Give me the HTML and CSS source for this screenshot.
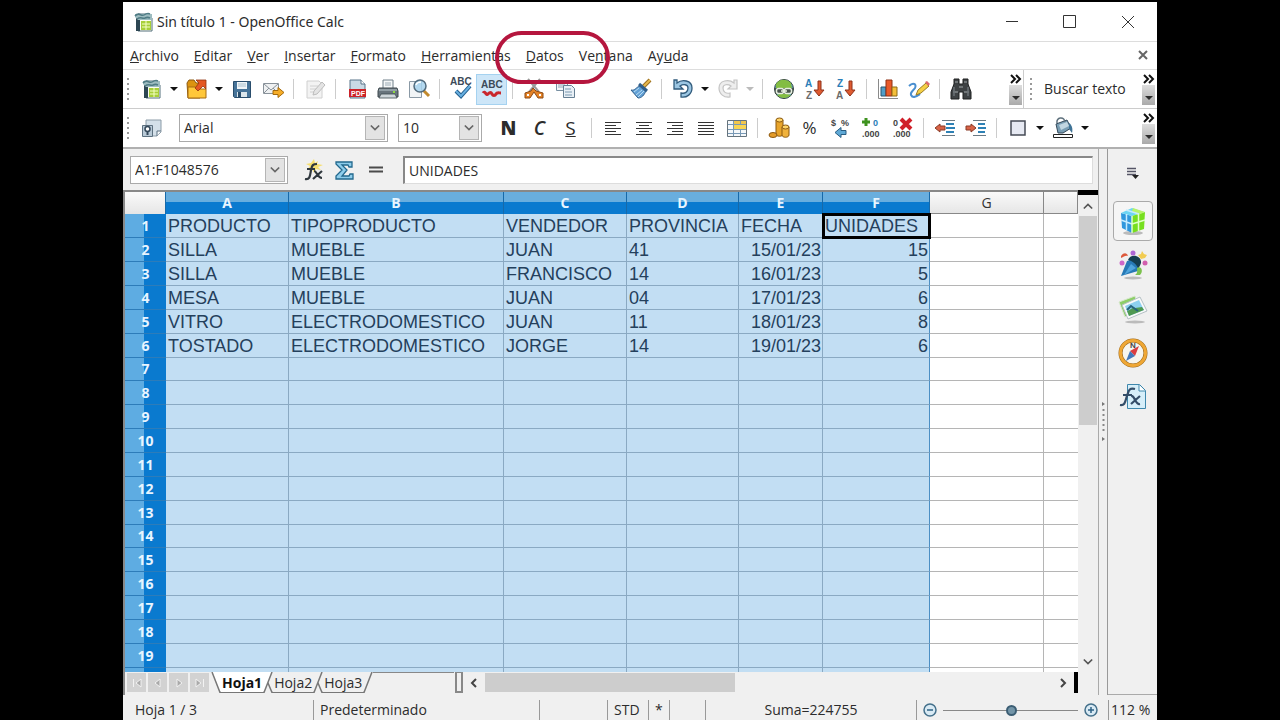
FILE: index.html
```html
<!DOCTYPE html>
<html lang="es">
<head>
<meta charset="utf-8">
<title>Sin título 1 - OpenOffice Calc</title>
<link rel="stylesheet" href="styles.css">
</head>
<body>
<svg class="defs" width="0" height="0" aria-hidden="true">
  <symbol id="i-doc" viewBox="0 0 22 22"><path d="M5 3h10l4 4v13H5z" fill="#fdfdf0" stroke="#55707c"/><path d="M3 4h4v16H3z" fill="#2d4653"/><path d="M2 3h17v6H5L2 6z" fill="#9dbcc0"/><path d="M2 5c4-5 6 1 9-1s4-2 6-1M4 8c4-3 5 0 8-1 2-1 3-1 5 0" fill="none" stroke="#4f7b84" stroke-width="1.5"/><path d="M8 10h10v9H8z" fill="#a8cf38"/><path d="M9 13h8M9 16h8M13 10v9" stroke="#f4ffc4"/></symbol>
  <symbol id="i-down" viewBox="0 0 8 5"><path d="M0 0h8L4 4z" fill="currentColor"/></symbol>
  <symbol id="i-chev" viewBox="0 0 12 8"><path d="M1 1l5 5 5-5" fill="none" stroke="currentColor" stroke-width="2"/></symbol>
  <symbol id="i-more" viewBox="0 0 12 10"><path d="M1 1l4 4-4 4M6 1l4 4-4 4" fill="none" stroke="#111" stroke-width="2"/></symbol>
</svg>

<div class="window">
  <header class="titlebar">
    <svg class="ico" aria-hidden="true"><use href="#i-doc"/></svg>
    <h1>Sin título 1 - OpenOffice Calc</h1>
    <div class="wincontrols">
      <button aria-label="Minimizar"><svg width="14" height="14"><path d="M1 6.500h12" stroke="#333" fill="none"/></svg></button>
      <button aria-label="Maximizar"><svg width="14" height="14"><path d="M.5 .5h12v12h-12z" stroke="#333" fill="none"/></svg></button>
      <button aria-label="Cerrar"><svg width="14" height="14"><path d="M1 1l12 12M13 1L1 13" stroke="#333" fill="none"/></svg></button>
    </div>
  </header>

  <nav class="menubar">
    <button><u>A</u>rchivo</button><button><u>E</u>ditar</button><button><u>V</u>er</button><button><u>I</u>nsertar</button><button><u>F</u>ormato</button><button><u>H</u>erramientas</button><button class="marked"><u>D</u>atos</button><button>Ve<u>n</u>tana</button><button>Ay<u>u</u>da</button>
    <button class="closedoc" aria-label="Cerrar documento"><svg width="12" height="12"><path d="M2 1l8 8M10 1l-8 8" stroke="#666" stroke-width="2"/></svg></button>
  </nav>

  <div class="toolbar">
    <span class="grip"></span>
    <button class="tool" aria-label="Nuevo"><svg class="ico"><use href="#i-doc"/></svg></button>
    <button class="drop" aria-label="Opciones de nuevo"><svg><use href="#i-down"/></svg></button>
    <button class="tool" aria-label="Abrir"><svg class="ico"><path d="M1 5l2-3h5l2 3h4v15H2z" fill="#dc9310" stroke="#8b5a12"/><path d="M2 20V9h7l2 2h9v9z" fill="#ffc73a" stroke="#a66b10"/><path d="M9 10l4-5-3-3h10v9l-3-3-5 5z" fill="#e45722" stroke="#91340f" stroke-width=".8"/></svg></button>
    <button class="drop" aria-label="Opciones de abrir"><svg><use href="#i-down"/></svg></button>
    <button class="tool" aria-label="Guardar"><svg class="ico"><path d="M2.500 3.500h17v16h-16l-1-1z" fill="#477499" stroke="#294d6c"/><path d="M6 4h10v7H6z" fill="#f0f5f8"/><path d="M7 6h8M7 8h8" stroke="#aac0cd"/><path d="M6 14h10v5H6z" fill="#dce6eb"/><path d="M7 14h3v5H7z" fill="#294d6c"/></svg></button>
    <button class="tool" aria-label="Enviar por correo"><svg class="ico"><path d="M1.500 5.500h15v10h-15z" fill="#eff1f2" stroke="#89929a"/><path d="M2 6l7 6 7-6M2 15l5-5M16 15l-5-5" fill="none" stroke="#89929a"/><path d="M11 12.500h5v-3l6 5-6 5v-3h-5z" fill="#f6ad28" stroke="#a46a0b"/></svg></button>
    <span class="sep"></span>
    <button class="tool" aria-label="Editar archivo" disabled><svg class="ico"><path d="M3 3h12l3 3v14H3z" fill="#f3f3f3" stroke="#d0d0d0"/><path d="M6 8h8M6 11h7M6 14h4" stroke="#d0d0d0"/><path d="M9 17l1-4 8-9 3 3-8 9z" fill="#e4e4e4" stroke="#bdbdbd"/></svg></button>
    <span class="sep"></span>
    <button class="tool" aria-label="Exportar como PDF"><svg class="ico"><path d="M4 2h11l4 4v14H4z" fill="#c9d9e4" stroke="#59748a"/><path d="M15 2v4h4" fill="#fff" stroke="#59748a"/><path d="M3 11h17v8H3z" fill="#cc2229"/><text x="5" y="18" class="t-pdf">PDF</text></svg></button>
    <button class="tool" aria-label="Imprimir"><svg class="ico"><path d="M6 10V2h10v8" fill="#f5f7f8" stroke="#71808a"/><path d="M8 5h6M8 7h6" stroke="#9cabb5"/><path d="M2 10h18l1 3v6H1v-6z" fill="#68747c" stroke="#3e494f"/><path d="M2 12h18" stroke="#bcc9cf"/><path d="M4 16h14l2 4H2z" fill="#cfd7db" stroke="#3e494f" stroke-width=".8"/><path d="M16 14h2" stroke="#8ddb40" stroke-width="2"/></svg></button>
    <button class="tool" aria-label="Vista preliminar"><svg class="ico"><path d="M1.500 3.500h12v16h-12z" fill="#f1f4f6" stroke="#8a99a5"/><path d="M15 12l6 6" stroke="#c28a2d" stroke-width="3"/><circle cx="12" cy="8" r="6" fill="#a7d2ed" fill-opacity=".85" stroke="#526b7d" stroke-width="1.500"/><path d="M8 7c1-3 3-3 5-3" fill="none" stroke="#fff" stroke-width="1.500"/></svg></button>
    <span class="sep"></span>
    <button class="tool" aria-label="Ortografía"><svg class="ico"><text x="0" y="7" class="t-abc">ABC</text><path d="M6 13l5 5L20 8" fill="none" stroke="#235f8e" stroke-width="4"/><path d="M6 13l5 5L20 8" fill="none" stroke="#68afe0" stroke-width="2"/></svg></button>
    <button class="tool on" aria-label="Revisión automática" aria-pressed="true"><svg class="ico"><text x="0" y="10" class="t-abc">ABC</text><path d="M2 15c2-3 3 3 5 1s3-2 4 0 3 2 4 0 3-1 5-1" fill="none" stroke="#c9272d" stroke-width="3"/></svg></button>
    <span class="sep"></span>
    <button class="tool" aria-label="Cortar"><svg class="ico"><path d="M5 1l11 13M17 1L6 14" stroke="#9a9a9a" stroke-width="2"/><path d="M10 10l3 3 7 2v5h-5l-4-6-4 6H2v-5l6-2z" fill="#e48225" stroke="#8e4a14"/><path d="M4 17h2M16 17h2" stroke="#fff" stroke-width="2"/></svg></button>
    <button class="tool" aria-label="Copiar"><svg class="ico"><path d="M2.500 2.500h11v10h-11z" fill="#f2f5f8" stroke="#7890a3"/><path d="M4 5h7M4 7h7M4 9h7" stroke="#91a5b4"/><path d="M9.500 7.500h8l3 3v9h-11z" fill="#e9f0f6" stroke="#667f93"/><path d="M11 11h6M11 14h7M11 17h7" stroke="#7b99b0"/></svg></button>
    <span class="blank"></span>
    <button class="tool" aria-label="Copiar formato"><svg class="ico"><path d="M13 9l7-7" stroke="#9b7021" stroke-width="4"/><path d="M13 9l7-7" stroke="#e8b94d" stroke-width="2"/><path d="M1 12c4 1 5-3 9-4l6 5c-2 4-4 7-8 7z" fill="#63a1d6" stroke="#315f8b"/><path d="M4 14l5-4M6 17l6-5M8 19l6-6" stroke="#b9ddf3"/><path d="M9 6l8 7" stroke="#315f8b" stroke-width="3"/></svg></button>
    <span class="sep"></span>
    <button class="tool" aria-label="Deshacer"><svg class="ico"><path d="M2 2h3v3c5-4 15-3 15 5 0 6-5 10-11 9v-4c4 1 7-1 7-5 0-4-5-4-8-2l3 3H2z" fill="#9cc6e2" stroke="#315b7c" stroke-width="1.300"/></svg></button>
    <button class="drop" aria-label="Historial de deshacer"><svg><use href="#i-down"/></svg></button>
    <button class="tool" aria-label="Restaurar" disabled><svg class="ico"><path d="M20 2h-3v3C12 1 2 2 2 10c0 6 5 10 11 9v-4c-4 1-7-1-7-5 0-4 5-4 8-2l-3 3h9z" fill="#eee" stroke="#c4c4c4" stroke-width="1.200"/></svg></button>
    <button class="drop" aria-label="Historial de restaurar" disabled><svg><use href="#i-down"/></svg></button>
    <span class="sep"></span>
    <button class="tool" aria-label="Hiperenlace"><svg class="ico"><circle cx="11" cy="11" r="9.500" fill="#5a9fc6" stroke="#34413c"/><path d="M3 6c3-5 10-6 15-1l1 5H9l-6 3zM4 17c4-2 9-2 14 0-4 4-10 4-14 0z" fill="#83bd43"/><path d="M2 10h18v6H2z" fill="#47534c"/><rect x="3.500" y="10.500" width="7" height="5" rx="2" fill="none" stroke="#e6efdf" stroke-width="1.500"/><rect x="11.500" y="10.500" width="7" height="5" rx="2" fill="none" stroke="#e6efdf" stroke-width="1.500"/><path d="M8 13h6" stroke="#e6efdf" stroke-width="1.500"/></svg></button>
    <button class="tool" aria-label="Orden ascendente"><svg class="ico"><text x="1" y="9" class="t-sort blue">A</text><text x="2" y="21" class="t-sort gray">Z</text><path d="M14 3h3v9h3l-5 6-5-6h4z" fill="#df5b31" stroke="#8e321b"/></svg></button>
    <button class="tool" aria-label="Orden descendente"><svg class="ico"><text x="2" y="9" class="t-sort blue">Z</text><text x="1" y="21" class="t-sort gray">A</text><path d="M14 3h3v9h3l-5 6-5-6h4z" fill="#df5b31" stroke="#8e321b"/></svg></button>
    <span class="sep"></span>
    <button class="tool" aria-label="Gráfico"><svg class="ico"><path d="M1.500 1v19.500H21" fill="none" stroke="#8a8a8a"/><path d="M4 9h5v9H4z" fill="#519ec7" stroke="#29546e"/><path d="M9 2h6v16H9z" fill="#e95a29" stroke="#8f3015"/><path d="M15 9h5v9h-5z" fill="#f4bf3a" stroke="#8c6a16"/></svg></button>
    <button class="tool" aria-label="Dibujo"><svg class="ico"><path d="M1 8c4-4 8-2 6 2-2 3-5 4-4 7 2 4 6 1 9-1" fill="none" stroke="#4a8fd0" stroke-width="2"/><path d="M8 17l2-5 8-7 3 3-8 7z" fill="#f4cf45" stroke="#9a7c25"/><path d="M17 4l2-1 3 3-2 2z" fill="#dc6b70"/></svg></button>
    <span class="sep"></span>
    <button class="tool" aria-label="Buscar y reemplazar"><svg class="ico"><path d="M4 1h5v5h4V1h5v5l3 8v7h-8v-7H9v7H1v-7l3-8z" fill="#3e4244" stroke="#1e2021"/><path d="M3 14h5M14 14h5M5 4h3M14 4h3M9 9h4" stroke="#a2a8aa"/><path d="M4 9v9M18 9v9" stroke="#6b7275" stroke-width="1.500"/></svg></button>
    <button class="overflow push" aria-label="Más botones"><svg class="more"><use href="#i-more"/></svg><svg class="arr"><use href="#i-down"/></svg></button>
    <div class="findbar">
      <span class="grip"></span>
      <input class="find" aria-label="Buscar texto" value="Buscar texto">
      <button class="overflow push" aria-label="Más botones de búsqueda"><svg class="more"><use href="#i-more"/></svg><svg class="arr"><use href="#i-down"/></svg></button>
    </div>
  </div>

  <div class="toolbar format">
    <span class="grip"></span>
    <button class="tool" aria-label="Estilo y formato"><svg class="ico"><path d="M5 3h15v12l-4 4H5z" fill="#d4e0e9" stroke="#8c9ca8"/><path d="M20 14h-4v5" fill="#f8fafc" stroke="#5d7180"/><path d="M1.500 8.500h10v11h-10z" fill="#b9cad7" stroke="#5d7180"/><circle cx="6.500" cy="12" r="2.500" fill="#fff" stroke="#34485a" stroke-width="1.500"/><path d="M6.500 14v4" stroke="#34485a" stroke-width="2"/></svg></button>
    <span class="combo font"><select aria-label="Nombre de fuente"><option>Arial</option></select><svg><use href="#i-chev"/></svg></span>
    <span class="combo size"><select aria-label="Tamaño de fuente"><option>10</option></select><svg><use href="#i-chev"/></svg></span>
    <button class="tool letter bold" aria-label="Negrita">N</button>
    <button class="tool letter italic" aria-label="Cursiva">C</button>
    <button class="tool letter under" aria-label="Subrayado">S</button>
    <span class="sep"></span>
    <button class="tool" aria-label="Alinear a la izquierda"><svg class="ico"><path d="M3 5.500h16M3 8.500h11M3 11.500h16M3 14.500h11M3 17.500h16" stroke="#333"/></svg></button>
    <button class="tool" aria-label="Centrar"><svg class="ico"><path d="M3 5.500h16M6 8.500h10M3 11.500h16M6 14.500h10M3 17.500h16" stroke="#333"/></svg></button>
    <button class="tool" aria-label="Alinear a la derecha"><svg class="ico"><path d="M3 5.500h16M8 8.500h11M3 11.500h16M8 14.500h11M3 17.500h16" stroke="#333"/></svg></button>
    <button class="tool" aria-label="Justificar"><svg class="ico"><path d="M3 5.500h16M3 8.500h16M3 11.500h16M3 14.500h16M3 17.500h16" stroke="#333"/></svg></button>
    <button class="tool" aria-label="Combinar celdas"><svg class="ico"><path d="M1.500 3.500h19v16h-19z" fill="#f5f8fa" stroke="#65737c"/><path d="M8 4h12v3H8z" fill="#f1c74c"/><path d="M7 8h13v4H7z" fill="#f8d553"/><path d="M2 7.500h18M2 12.500h18M2 16.500h18M7.500 4v15M14.500 4v3M14.500 13v6" stroke="#7899b6"/></svg></button>
    <span class="sep"></span>
    <button class="tool" aria-label="Moneda"><svg class="ico"><path d="M8 3v14c0 3 7 3 7 0V3z" fill="#e9a52b" stroke="#8b5810"/><ellipse cx="11.500" cy="3" rx="3.500" ry="2" fill="#ffd467" stroke="#8b5810"/><path d="M14 10v8c0 3 7 3 7 0v-8z" fill="#f0b23c" stroke="#8b5810"/><ellipse cx="17.500" cy="10" rx="3.500" ry="2" fill="#ffd467" stroke="#8b5810"/><ellipse cx="5" cy="18" rx="4" ry="2.500" fill="#e49b29" stroke="#8b5810"/></svg></button>
    <button class="tool percent" aria-label="Porcentaje">%</button>
    <button class="tool" aria-label="Formato estándar"><svg class="ico"><text x="1" y="9" class="t-num">$</text><text x="11" y="9" class="t-num">%</text><path d="M5 15.500l6-5v3h5v4h-5v3z" fill="#5fa9d6" stroke="#285d82"/></svg></button>
    <button class="tool" aria-label="Agregar decimal"><svg class="ico"><path d="M5 1v8M1 5h8" stroke="#3e921f" stroke-width="3"/><text x="12" y="9" class="t-num blue">0</text><text x="1" y="20" class="t-num">.000</text></svg></button>
    <button class="tool" aria-label="Eliminar decimal"><svg class="ico"><text x="1" y="9" class="t-num">0</text><text x="1" y="20" class="t-num">.000</text><path d="M9 2l10 10M19 2L9 12" stroke="#d01f29" stroke-width="4"/></svg></button>
    <span class="sep"></span>
    <button class="tool" aria-label="Reducir sangría"><svg class="ico"><path d="M8 3.500h13M8 18.500h13" stroke="#6b7a84"/><path d="M12 7h8M12 11h9M12 15h8" stroke="#2e81b5" stroke-width="2"/><path d="M1 11l5-4v2h5v4H6v2z" fill="#d96347" stroke="#893b27"/></svg></button>
    <button class="tool" aria-label="Aumentar sangría"><svg class="ico"><path d="M8 3.500h13M8 18.500h13" stroke="#6b7a84"/><path d="M13 7h7M13 11h8M13 15h7" stroke="#2e81b5" stroke-width="2"/><path d="M11 11L6 7v2H1v4h5v2z" fill="#d96347" stroke="#893b27"/></svg></button>
    <span class="sep"></span>
    <button class="tool" aria-label="Borde"><svg class="ico"><path d="M4 4h14v14H4z" fill="#e6e9f2" stroke="#454b55" stroke-width="1.500"/></svg></button>
    <button class="drop" aria-label="Opciones de borde"><svg><use href="#i-down"/></svg></button>
    <button class="tool" aria-label="Color de fondo"><svg class="ico"><path d="M4 7l11-4 4 8-8 5H6z" fill="#7a9eb4" stroke="#34495a"/><path d="M5 6c-1-6 7-7 8-1" fill="none" stroke="#5f717d" stroke-width="1.500"/><path d="M7 8l8-3 2 4-8 4z" fill="#c2d6e1"/><path d="M17 6c3 2 4 6 3 10l-3-4z" fill="#3f7396"/><path d="M1.500 17.500h19v3h-19z" fill="#fff" stroke="#222"/></svg></button>
    <button class="drop" aria-label="Opciones de color"><svg><use href="#i-down"/></svg></button>
    <button class="overflow push" aria-label="Más formato"><svg class="more"><use href="#i-more"/></svg><svg class="arr"><use href="#i-down"/></svg></button>
  </div>

  <div class="workspace">
    <main class="document">
      <div class="formulabar">
        <span class="combo name"><input aria-label="Cuadro de nombre" value="A1:F1048576"><svg><use href="#i-chev"/></svg></span>
        <button class="tool" aria-label="Asistente de funciones"><svg class="ico"><path d="M11 0l1 4 3-2-1 3 6 1-5 2 3 3-5-1-2 4-2-4-5 1 3-4-4-2 5-1z" fill="#f6df70"/><path d="M2 20c5 1 5-3 6-9 1-5 2-6 6-6M4 10h8M11 12c3 0 3 7 8 7M19 12l-9 8" fill="none" stroke="#30383e" stroke-width="2.200"/></svg></button>
        <button class="tool" aria-label="Suma"><svg class="ico"><path d="M2 3h16v5h-3l-1-2H8l5 5-5 6h7l1-2h3v5H2v-3l6-6-6-6z" fill="#8ecdeb" stroke="#22688d" stroke-width="1.300"/></svg></button>
        <button class="tool" aria-label="Función"><svg class="ico"><path d="M4 8.500h14M4 12.500h14" stroke="#4b4b4b" stroke-width="2"/></svg></button>
        <input class="formula" aria-label="Línea de entrada" value="UNIDADES">
      </div>

      <div class="sheetarea">
        <div class="sheet">
          <table>
            <colgroup><col class="w-h"><col class="w-a"><col class="w-b"><col class="w-a"><col class="w-d"><col class="w-e"><col class="w-f"><col class="w-g"><col></colgroup>
            <thead><tr><th class="corner"></th><th>A</th><th>B</th><th>C</th><th>D</th><th>E</th><th>F</th><th class="off">G</th><th class="off"></th></tr></thead>
            <tbody>
              <tr><th>1</th><td>PRODUCTO</td><td>TIPOPRODUCTO</td><td>VENDEDOR</td><td>PROVINCIA</td><td>FECHA</td><td class="cursor">UNIDADES</td><td></td><td></td></tr>
              <tr><th>2</th><td>SILLA</td><td>MUEBLE</td><td>JUAN</td><td>41</td><td class="num">15/01/23</td><td class="num">15</td><td></td><td></td></tr>
              <tr><th>3</th><td>SILLA</td><td>MUEBLE</td><td>FRANCISCO</td><td>14</td><td class="num">16/01/23</td><td class="num">5</td><td></td><td></td></tr>
              <tr><th>4</th><td>MESA</td><td>MUEBLE</td><td>JUAN</td><td>04</td><td class="num">17/01/23</td><td class="num">6</td><td></td><td></td></tr>
              <tr><th>5</th><td>VITRO</td><td>ELECTRODOMESTICO</td><td>JUAN</td><td>11</td><td class="num">18/01/23</td><td class="num">8</td><td></td><td></td></tr>
              <tr><th>6</th><td>TOSTADO</td><td>ELECTRODOMESTICO</td><td>JORGE</td><td>14</td><td class="num">19/01/23</td><td class="num">6</td><td></td><td></td></tr>
              <tr><th>7</th><td></td><td></td><td></td><td></td><td></td><td></td><td></td><td></td></tr>
              <tr><th>8</th><td></td><td></td><td></td><td></td><td></td><td></td><td></td><td></td></tr>
              <tr><th>9</th><td></td><td></td><td></td><td></td><td></td><td></td><td></td><td></td></tr>
              <tr><th>10</th><td></td><td></td><td></td><td></td><td></td><td></td><td></td><td></td></tr>
              <tr><th>11</th><td></td><td></td><td></td><td></td><td></td><td></td><td></td><td></td></tr>
              <tr><th>12</th><td></td><td></td><td></td><td></td><td></td><td></td><td></td><td></td></tr>
              <tr><th>13</th><td></td><td></td><td></td><td></td><td></td><td></td><td></td><td></td></tr>
              <tr><th>14</th><td></td><td></td><td></td><td></td><td></td><td></td><td></td><td></td></tr>
              <tr><th>15</th><td></td><td></td><td></td><td></td><td></td><td></td><td></td><td></td></tr>
              <tr><th>16</th><td></td><td></td><td></td><td></td><td></td><td></td><td></td><td></td></tr>
              <tr><th>17</th><td></td><td></td><td></td><td></td><td></td><td></td><td></td><td></td></tr>
              <tr><th>18</th><td></td><td></td><td></td><td></td><td></td><td></td><td></td><td></td></tr>
              <tr><th>19</th><td></td><td></td><td></td><td></td><td></td><td></td><td></td><td></td></tr>
              <tr><th></th><td></td><td></td><td></td><td></td><td></td><td></td><td></td><td></td></tr>
            </tbody>
          </table>
        </div>
        <div class="vscroll">
          <button class="up" aria-label="Subir"><svg width="12" height="8"><use href="#i-chev"/></svg></button>
          <div class="track"><div class="thumb"></div></div>
          <button aria-label="Bajar"><svg width="12" height="8"><use href="#i-chev"/></svg></button>
        </div>
      </div>

      <div class="tabrow">
        <div class="tabnav">
          <button aria-label="Primera hoja"><svg width="12" height="12"><path d="M2.500 2v8M10 2v8L5 6z"/></svg></button>
          <button aria-label="Hoja anterior"><svg width="12" height="12"><path d="M8 2v8L3 6z"/></svg></button>
          <button aria-label="Hoja siguiente"><svg width="12" height="12"><path d="M4 2v8l5-4z"/></svg></button>
          <button aria-label="Última hoja"><svg width="12" height="12"><path d="M2 2v8l5-4zM9.500 2v8"/></svg></button>
        </div>
        <svg class="slant first" viewBox="0 0 10 21"><path d="M0 0h10v21z" fill="#fff"/><path d="M1 0l8 20.500h1" fill="none" stroke="#777" stroke-width="1.500"/></svg>
        <button class="tab active">Hoja1</button>
        <svg class="slant" viewBox="0 0 10 21"><path d="M0 0h9L1 21H0z" fill="#fff"/><path d="M0 20.500h1L9 0M5 11l4 9.500h1" fill="none" stroke="#777" stroke-width="1.500"/></svg>
        <button class="tab">Hoja2</button>
        <svg class="slant" viewBox="0 0 10 21"><path d="M0 20.500h1L9 0M5 11l4 9.500h1" fill="none" stroke="#777" stroke-width="1.500"/></svg>
        <button class="tab">Hoja3</button>
        <svg class="slant" viewBox="0 0 10 21"><path d="M0 20.500h1L9 0" fill="none" stroke="#777" stroke-width="1.500"/></svg>
        <span class="tabrest"></span>
        <span class="splitbox"></span>
        <div class="hscroll">
          <button aria-label="Izquierda"><svg width="8" height="10"><path d="M6 1L2 5l4 4" fill="none" stroke="#444" stroke-width="2"/></svg></button>
          <div class="track"><div class="thumb"></div></div>
          <button aria-label="Derecha"><svg width="8" height="10"><path d="M2 1l4 4-4 4" fill="none" stroke="#444" stroke-width="2"/></svg></button>
        </div>
        <span class="splitend"></span>
      </div>
    </main>

    <div class="divider"><svg width="6" height="44"><path d="M2 3l3 2-3 2zM2 38l3 2-3 2z" fill="#777"/><path d="M3.500 10v24" stroke="#888" stroke-width="2" stroke-dasharray="2 3"/></svg></div>

    <aside class="sidebar">
      <button class="deck menu" aria-label="Configuración de la barra lateral"><svg width="16" height="16"><path d="M2 3.500h9M2 6.500h9M2 9.500h9" stroke="#556" stroke-width="1.500"/><path d="M7 10h7l-3.500 4z" fill="#222"/></svg></button>
      <button class="deck on" aria-label="Propiedades"><svg width="30" height="30" viewBox="0 0 30 30"><ellipse cx="15" cy="27" rx="10" ry="2" fill="#bbb"/><path d="M3 7l11 3v17L4 22z" fill="#2f97dd"/><path d="M3 7l11-5 12 4-12 4z" fill="#6cd5f4"/><path d="M14 10l13-4-1 17-12 4z" fill="#77df1e"/><path d="M15 2l12 4-7 3-6-4z" fill="#b8f36a"/><path d="M8.500 8v16M3 14l11 4M8 4l13 4" stroke="#c5ebff" fill="none" stroke-width="1.500"/><path d="M14 10v17M14 18l13-4M20.500 8v17" stroke="#e0ffc8" fill="none" stroke-width="1.500"/></svg></button>
      <button class="deck" aria-label="Estilos"><svg width="30" height="30" viewBox="0 0 30 30"><ellipse cx="15" cy="28" rx="9" ry="1.500" fill="#bbb"/><path d="M10 10c2-7 14-5 13 3-1 3-2 4-3 6l-4-5z" fill="#153e50"/><path d="M3 26L9 11c4-3 13 6 11 10z" fill="#2779b5"/><path d="M6 25l7-11 5 4z" fill="#4fa4dc"/><path d="M3 6c3-4 6-3 7 0-3-1-4 1-7 2z" fill="#dd593b"/><circle cx="15" cy="3" r="2.500" fill="#ae67d5"/><path d="M24 1l2 3 3 1-2 3-4 1-3-4 3-1z" fill="#f2cc52"/><circle cx="27" cy="13" r="2.500" fill="#d25fae"/><circle cx="4" cy="13" r="2.500" fill="#ce68c8"/><path d="M19 18c4-3 7 3 3 7h-5c3-2 2-4 2-7z" fill="#7bc14d"/></svg></button>
      <button class="deck" aria-label="Galería"><svg width="30" height="30" viewBox="0 0 30 30"><ellipse cx="17" cy="28" rx="10" ry="1.500" fill="#bbb"/><path d="M1 8l16-6 3 12-13 9z" fill="#8dce68" stroke="#d8e9ce"/><path d="M4 11l18-8 7 14-19 8z" fill="#fafafa" stroke="#b4c0c5"/><path d="M7 12l14-6 5 10-15 6z" fill="#8dd0f0"/><path d="M9 17c4-1 5-4 8-3l7-1 2 3-15 6z" fill="#4f9952"/><path d="M9 16l4-4 7 5" fill="none" stroke="#27647f" stroke-width="2"/></svg></button>
      <button class="deck" aria-label="Navegador"><svg width="30" height="30" viewBox="0 0 30 30"><circle cx="15" cy="15" r="12.500" fill="#f7f5ee" stroke="#9c681a" stroke-width="4"/><circle cx="15" cy="15" r="12.500" fill="none" stroke="#efa735" stroke-width="3"/><text x="12" y="10" class="t-north">N</text><path d="M21 8l-9 5 5 5z" fill="#db3e41"/><path d="M8 23l4-10 5 5z" fill="#4378ba"/></svg></button>
      <button class="deck" aria-label="Funciones"><svg width="30" height="30" viewBox="0 0 30 30"><path d="M9.500 2.500h12l6 6v18h-18z" fill="#d6eef9" stroke="#3e87ac"/><path d="M21 3v6h6" fill="#fff" stroke="#3e87ac"/><path d="M2 23c6 1 5-5 8-12 1-4 3-5 7-4M5 13h9M13 14c4-1 4 9 9 8M22 14l-9 8" fill="none" stroke="#344d68" stroke-width="2.200"/></svg></button>
    </aside>
  </div>

  <footer class="status">
    <span>Hoja 1 / 3</span><span>Predeterminado</span><span></span><span>STD</span><span>*</span><span></span><span class="sum">Suma=224755</span>
    <span class="zoom">
      <button aria-label="Reducir"><svg width="14" height="14"><circle cx="7" cy="7" r="6" fill="#d9eaf4" stroke="#44708b" stroke-width="1.500"/><path d="M4 7h6" stroke="#2e6285" stroke-width="1.500"/></svg></button>
      <input type="range" min="0" max="100" value="51" aria-label="Escala">
      <button aria-label="Ampliar"><svg width="14" height="14"><circle cx="7" cy="7" r="6" fill="#d9eaf4" stroke="#44708b" stroke-width="1.500"/><path d="M4 7h6M7 4v6" stroke="#2e6285" stroke-width="1.500"/></svg></button>
    </span>
    <span class="pct">112 %</span>
  </footer>
</div>
</body>
</html>
```

FILE: styles.css
```css
* { box-sizing: border-box; }
body {
  margin: 0;
  background: #000;
  color: #2c2c2c;
  font: 14px/20px "Open Sans", "Noto Sans", sans-serif;
}
button, input, select { font: inherit; color: inherit; margin: 0; }
button { border: 0; padding: 0; background: none; }
svg { display: block; flex: none; }
.defs { position: absolute; }

.window {
  display: flex;
  flex-direction: column;
  height: 100vh;
  margin: 0 123px;
  border-top: 2px solid #000;
  background: #f0f0f0;
  overflow: hidden;
}

.titlebar {
  display: flex;
  align-items: center;
  height: 40px;
  padding-left: 10px;
  background: #fff;
  border-bottom: 1px solid #ddd;
}
.titlebar h1 { flex: 1; margin: 0 0 0 2px; font: 400 14px/20px "Noto Sans", sans-serif; }
.wincontrols { display: flex; }
.wincontrols button { width: 58px; height: 38px; display: grid; place-items: center; }

.menubar {
  display: flex;
  align-items: center;
  gap: 15px;
  height: 28px;
  padding: 0 8px 0 7px;
  background: #fff;
  border-bottom: 1px solid #ddd;
}
.closedoc { margin-left: auto; }
.marked { position: relative; }
.marked::after {
  content: "";
  position: absolute;
  inset: -15px -46px -18px -31px;
  z-index: 2;
  border: 4px solid #b5163e;
  border-radius: 27px;
  pointer-events: none;
}

.toolbar {
  display: flex;
  align-items: center;
  height: 39px;
  padding: 0 2px 0 4px;
  background: #fff;
  border-bottom: 1px solid #ccc;
}
.format { height: 40px; border-bottom: 2px solid #b0b0b0; }
.grip {
  flex: none;
  width: 2px;
  height: 23px;
  margin-right: 7px;
  background: repeating-linear-gradient(#999 0 2px, #fff 2px 5px);
}
.tool {
  flex: none;
  width: 31px;
  height: 31px;
  display: grid;
  place-items: center;
}
.tool.on { background: #cde6f8; border: 1px solid #a5d2f0; }
.ico { width: 22px; height: 22px; overflow: visible; }
.drop { width: 14px; height: 31px; display: grid; place-items: center; color: #111; }
.drop:disabled { color: #bbb; }
.drop svg { width: 8px; height: 5px; }
.sep { flex: none; width: 1px; height: 20px; margin: 0 5px; background: #ccc; }
.blank { width: 45px; }
.push { margin-left: auto; }
.overflow {
  flex: none;
  width: 13px;
  height: 32px;
  display: flex;
  flex-direction: column;
  align-items: center;
  justify-content: space-between;
  padding: 1px 0 4px;
  background: linear-gradient(#fff 0 12px, #ddd 12px, #aaa);
}
.more { width: 12px; height: 10px; }
.arr { width: 8px; height: 5px; }
.findbar {
  display: flex;
  align-items: center;
  align-self: stretch;
  width: 132px;
  margin-left: 1px;
  padding-left: 6px;
  border-left: 1px solid #ccc;
}
.findbar .grip { margin-right: 12px; }
.find { flex: 1; min-width: 0; padding: 0; border: 0; background: none; outline: 0; }

.combo {
  display: flex;
  align-items: center;
  height: 28px;
  border: 1px solid #aaa;
  background: #fff;
}
.combo select, .combo input {
  flex: 1;
  min-width: 0;
  height: 24px;
  padding: 0 4px;
  border: 0;
  background: none;
  appearance: none;
  outline: 0;
}
.combo svg {
  width: 20px;
  height: 24px;
  margin-right: 2px;
  padding: 7px 4px;
  border: 1px solid #b5b5b5;
  background: #e3e3e3;
  color: #666;
}
.combo.font { width: 209px; margin: 0 10px 0 12px; }
.combo.size { width: 84px; margin-right: 11px; }
.letter { font-size: 19px; line-height: 22px; }
.bold { font-weight: 800; }
.italic { font-style: italic; font-weight: 600; }
.under { text-decoration: underline; }
.percent { font-size: 17px; }

.workspace { display: flex; flex: 1; min-height: 0; }
.document { display: flex; flex-direction: column; flex: 1; min-width: 0; }
.formulabar {
  display: flex;
  align-items: center;
  height: 41px;
  padding: 0 5px 0 7px;
}
.combo.name { width: 158px; margin-right: 10px; }
.formula {
  flex: 1;
  min-width: 0;
  height: 28px;
  margin-left: 12px;
  padding: 0 4px;
  border: 1px solid #ddd;
  border-top: 2px solid #888;
  border-left: 2px solid #888;
  background: #fff;
  outline: 0;
}

.sheetarea { display: flex; flex: 1; min-height: 0; }
.sheet {
  flex: 1;
  min-width: 0;
  overflow: hidden;
  background: #fff;
  border-top: 2px solid #888;
  border-left: 2px solid #888;
}
table { width: 100%; table-layout: fixed; border-collapse: separate; border-spacing: 0; }
.w-h { width: 41px; }
.w-a { width: 123px; }
.w-b { width: 215px; }
.w-d { width: 112px; }
.w-e { width: 84px; }
.w-f { width: 107px; }
.w-g { width: 114px; }
th {
  height: 22px;
  padding: 0;
  border-right: 1px solid #1769a8;
  background: linear-gradient(#69aede 0 10px, #0a7acf 10px);
  color: #e8f5ff;
  font-weight: 700;
}
.off, .corner { background: linear-gradient(#fafafa, #e6e6e6); color: #333; font-weight: 400; }
.off { border-right-color: #888; border-bottom: 1px solid #888; }
tbody th {
  height: 24px;
  border-right: 0;
  border-bottom: 1px solid #2d7cb9;
  background: linear-gradient(90deg, #5eace2 0 19px, #0a7acf 19px);
}
td {
  height: 24px;
  padding: 0 2px;
  border-right: 1px solid #8aa9c2;
  border-bottom: 1px solid #8aa9c2;
  background: #c2def3;
  color: #24405c;
  font: 18px/22px "Liberation Sans", Arial, sans-serif;
  white-space: nowrap;
}
td:nth-child(7) { border-right-color: #4c8fc4; }
td:nth-child(n+8) { background: #fff; border-color: #b5b5b5; }
td:last-child { border-right: 0; }
tr:nth-child(7n) > * { height: 23px; }
.num { text-align: right; padding-right: 1px; }
.cursor { outline: 3px solid #000; outline-offset: -2px; }

.vscroll { display: flex; flex-direction: column; width: 20px; border-top: 5px solid #000; color: #555; }
.vscroll button { height: 21px; display: grid; place-items: center; }
.vscroll svg { width: 10px; }
.up svg { transform: rotate(180deg); }
.track { flex: 1; }
.vscroll .thumb { height: 48%; margin: 0 1px; background: #cdcdcd; }

.tabrow { display: flex; height: 23px; padding: 0 20px 2px 0; border-left: 2px solid #888; }
.tabnav { display: flex; gap: 2px; padding: 1px 2px; }
.tabnav button { width: 19px; height: 19px; display: grid; place-items: center; background: #d2d2d2; }
.tabnav path { fill: #aaa; stroke: #f2f2f2; }
.slant { width: 10px; height: 21px; }
.tab { height: 21px; padding: 1px 1px 0; border-bottom: 1px solid #777; }
.tab.active { background: #fff; color: #111; font-weight: 700; }
.tabrest { width: 81px; border-top: 1px solid #888; }
.splitbox { width: 8px; margin-left: 1px; border: 2px solid #888; border-top-width: 1px; background: #f0f0f0; }
.hscroll { display: flex; flex: 1; }
.hscroll button { width: 22px; display: grid; place-items: center; }
.hscroll .thumb { width: 44%; height: 19px; margin-top: 1px; background: #cdcdcd; }
.splitend { width: 4px; background: #000; }

.divider {
  width: 10px;
  display: grid;
  place-items: center;
  padding-bottom: 2px;
  border-left: 1px solid #aaa;
  border-right: 1px solid #999;
}
.sidebar {
  width: 49px;
  display: flex;
  flex-direction: column;
  align-items: center;
  gap: 4px;
  border-bottom: 1px solid #aaa;
}
.deck { width: 40px; height: 40px; display: grid; place-items: center; }
.deck.menu { height: 48px; }
.deck.on { border: 1px solid #aaa; border-radius: 4px; background: #f5f5f5; }

.status {
  display: grid;
  grid-template-columns: 190px 226px 68px 41px 21px 36px 1fr 192px 49px;
  height: 25px;
  padding-top: 5px;
}
.status > span { padding-left: 6px; border-left: 1px solid #999; white-space: nowrap; }
.status > span:first-child { padding-left: 12px; border-left: 0; }
.status > .sum { text-align: center; padding: 0; }
.status > .zoom { display: flex; align-items: center; gap: 6px; }
.status > .pct { padding-left: 2px; }
.zoom input {
  flex: 1;
  min-width: 0;
  height: 16px;
  appearance: none;
  background: linear-gradient(#888, #888) center / 100% 1px no-repeat;
}
.zoom input::-webkit-slider-thumb {
  appearance: none;
  width: 11px;
  height: 11px;
  border: 2px solid #3b5d73;
  border-radius: 50%;
  background: #7395a8;
}
.zoom button:last-child { margin-right: 10px; }

text { font-family: "Liberation Sans", Arial, sans-serif; font-weight: 700; fill: #444; }
.t-pdf { font-size: 7px; fill: #fff; }
.t-abc { font-size: 10px; fill: #3c4a58; }
.t-sort { font-size: 10px; }
.t-num { font-size: 9px; }
.t-north { font-size: 8px; }
text.blue { fill: #2b7eb8; }
text.gray { fill: #6b6b6b; }
```
